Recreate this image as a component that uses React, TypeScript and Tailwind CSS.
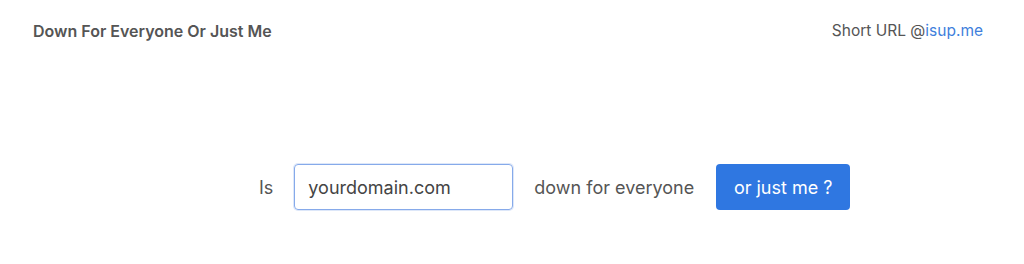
export default function App() {
  return (
    <div className="w-[1024px] h-[264px] bg-white text-[#555] font-['Inter','Liberation_Sans',Arial,sans-serif] overflow-hidden">
      <header className="flex items-center justify-between pl-[33px] pr-[41px] pt-[22px]">
        <h1 className="text-[16px] font-semibold leading-[18px]">Down For Everyone Or Just Me</h1>
        <p className="text-[15.5px] leading-[18px]">
          Short URL @<a className="text-[#3f7fdc]">isup.me</a>
        </p>
      </header>

      <form className="flex items-center pl-[259px] mt-[124px] text-[18px]">
        <span>Is</span>
        <input
          type="text"
          defaultValue="yourdomain.com"
          className="ml-[21px] w-[219px] h-[46px] px-[13px] rounded-[4px] border border-[#86aaea] shadow-[0_0_0_1px_rgba(120,160,230,0.25)] text-[#444] outline-none"
        />
        <span className="ml-[21px]">down for everyone</span>
        <button
          type="button"
          className="ml-[22px] w-[134px] h-[46px] rounded-[4px] bg-[#2f77e1] text-white text-[18px]"
        >
          or just me ?
        </button>
      </form>
    </div>
  );
}
